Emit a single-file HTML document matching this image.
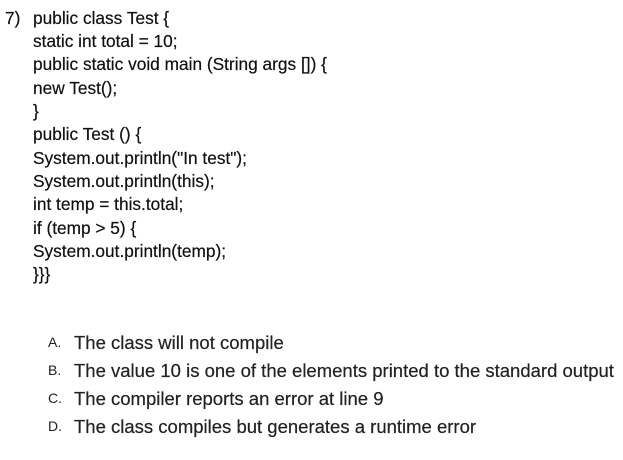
<!DOCTYPE html>
<html><head><style>
body{margin:0;background:#fff;width:623px;height:460px;overflow:hidden;font-family:"Liberation Sans",sans-serif;color:#111;}
.l{position:absolute;left:33px;font-size:17.3px;line-height:20px;white-space:pre;-webkit-text-stroke:0.2px #111;}
.n{position:absolute;left:5px;font-size:17.3px;line-height:20px;-webkit-text-stroke:0.2px #111;}
.o{position:absolute;left:74px;font-size:18.5px;line-height:20px;white-space:pre;color:#222;-webkit-text-stroke:0.2px #222;}
.k{position:absolute;left:48px;font-size:14px;line-height:20px;color:#222;}
</style></head><body>
<div class="n" style="top:8px">7)</div>
<div class="l" style="top:8px">public class Test {</div>
<div class="l" style="top:31px">static int total = 10;</div>
<div class="l" style="top:54px">public static void main (String args []) {</div>
<div class="l" style="top:78px">new Test();</div>
<div class="l" style="top:101px">}</div>
<div class="l" style="top:124px">public Test () {</div>
<div class="l" style="top:148px">System.out.println("In test");</div>
<div class="l" style="top:171px">System.out.println(this);</div>
<div class="l" style="top:194px">int temp = this.total;</div>
<div class="l" style="top:218px">if (temp &gt; 5) {</div>
<div class="l" style="top:241px">System.out.println(temp);</div>
<div class="l" style="top:264px">}}}</div>
<div class="k" style="top:332px">A.</div><div class="o" style="top:333px">The class will not compile</div>
<div class="k" style="top:360px">B.</div><div class="o" style="top:361px">The value 10 is one of the elements printed to the standard output</div>
<div class="k" style="top:388px">C.</div><div class="o" style="top:389px">The compiler reports an error at line 9</div>
<div class="k" style="top:416px">D.</div><div class="o" style="top:417px">The class compiles but generates a runtime error</div>
</body></html>
